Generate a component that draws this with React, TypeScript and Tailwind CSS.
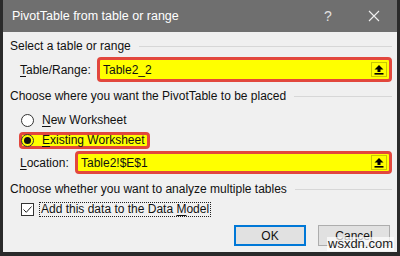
import React from "react";

function UpBtn() {
  return (
    <div className="w-[16px] h-[15px] mr-[2px] border border-[#c9c900] flex items-center justify-center bg-[#ffff00]">
      <svg width="10" height="11" viewBox="0 0 10 11">
        <polygon points="5,1 9.5,5.5 6.5,5.5 6.5,8 3.5,8 3.5,5.5 0.5,5.5" fill="#000" />
        <rect x="0.5" y="9" width="9" height="1.6" fill="#000" />
      </svg>
    </div>
  );
}

function Heading({ text }: { text: string }) {
  return (
    <div className="flex items-center h-[16px] leading-[16px]">
      <span>{text}</span>
      <div className="flex-1 h-px bg-[#d7d7d7] ml-[8px]" />
    </div>
  );
}

export default function App() {
  return (
    <div className="w-[400px] h-[256px] bg-[#2a2a2a] px-[3px] pb-[4px] flex flex-col font-['Liberation_Sans',Arial,sans-serif] text-[12px] text-[#111] relative overflow-hidden">
      <div className="h-[32px] shrink-0 bg-[#6f6f6f] flex items-center pl-[9px] pr-[13px] text-white">
        <span className="flex-1 text-[12.5px]">PivotTable from table or range</span>
        <span className="w-[20px] text-center text-[14px] text-[#e0e0e0]">?</span>
        <div className="w-[20px] ml-[26px] flex justify-center">
          <svg width="12" height="12" viewBox="0 0 12 12">
            <path d="M1 1 L11 11 M11 1 L1 11" stroke="#f0f0f0" strokeWidth="1.1" />
          </svg>
        </div>
      </div>
      <div className="flex-1 bg-[#f0f0f0] flex flex-col pt-[6px] pl-[7px] pr-[5px]">
        <Heading text="Select a table or range" />
        <div className="mt-[3px] flex items-center pl-[10px]">
          <span className="w-[77px]">
            <span className="underline underline-offset-2">T</span>able/Range:
          </span>
          <div className="flex-1 h-[25px] border-[3px] border-[#e2473d] rounded-[4px] bg-[#ffff00] flex items-center pl-[3px]">
            <span className="flex-1">Table2_2</span>
            <UpBtn />
          </div>
        </div>
        <div className="mt-[6px]">
          <Heading text="Choose where you want the PivotTable to be placed" />
        </div>
        <div className="mt-[8px] h-[16px] flex items-center pl-[11px]">
          <div className="w-[13px] h-[13px] rounded-full border border-[#333] bg-white" />
          <span className="ml-[8px]">
            <span className="underline underline-offset-2">N</span>ew Worksheet
          </span>
        </div>
        <div className="mt-[4px] pl-[9px] flex">
          <div className="h-[17px] border-[3px] border-[#e2473d] rounded-[4px] bg-[#ffff00] flex items-center pr-[2px]">
            <div className="w-[13px] h-[13px] -ml-[1px] rounded-full border border-[#333] bg-[#ffff00] flex items-center justify-center">
              <div className="w-[7px] h-[7px] rounded-full bg-[#111]" />
            </div>
            <span className="ml-[8px] leading-[11px]">
              <span className="underline underline-offset-2">E</span>xisting Worksheet
            </span>
          </div>
        </div>
        <div className="mt-[2px] flex items-center pl-[10px]">
          <span className="w-[55px]">
            <span className="underline underline-offset-2">L</span>ocation:
          </span>
          <div className="flex-1 h-[23px] border-[3px] border-[#e2473d] rounded-[4px] bg-[#ffff00] flex items-center pl-[3px]">
            <span className="flex-1">Table2!$E$1</span>
            <UpBtn />
          </div>
        </div>
        <div className="mt-[7px]">
          <Heading text="Choose whether you want to analyze multiple tables" />
        </div>
        <div className="mt-[4px] h-[16px] flex items-center pl-[11px]">
          <div className="w-[13px] h-[13px] border border-[#333] bg-white flex items-center justify-center">
            <svg width="11" height="11" viewBox="0 0 11 11">
              <path d="M1.5 5.5 L4.3 8.3 L9.5 2.5" stroke="#222" strokeWidth="1" fill="none" />
            </svg>
          </div>
          <span className="ml-[5px] border border-dotted border-[#222] px-[1px] leading-[13px]">
            Add this data to the Data <span className="underline underline-offset-2">M</span>odel
          </span>
        </div>
        <div className="mt-[8px] flex justify-end gap-[12px] pr-[2px]">
          <div className="w-[72px] h-[21px] border-2 border-[#0078d7] bg-[#e1e1e1] flex items-center justify-center">
            OK
          </div>
          <div className="w-[72px] h-[21px] border border-[#adadad] bg-[#e1e1e1] flex items-center justify-center">
            Cancel
          </div>
        </div>
      </div>
      <div className="absolute left-[327px] top-[237px] bg-white/70 px-[1px] text-[13px] leading-[14px] text-[#1a1a1a] font-['Liberation_Sans',sans-serif]">
        wsxdn.com
      </div>
    </div>
  );
}
